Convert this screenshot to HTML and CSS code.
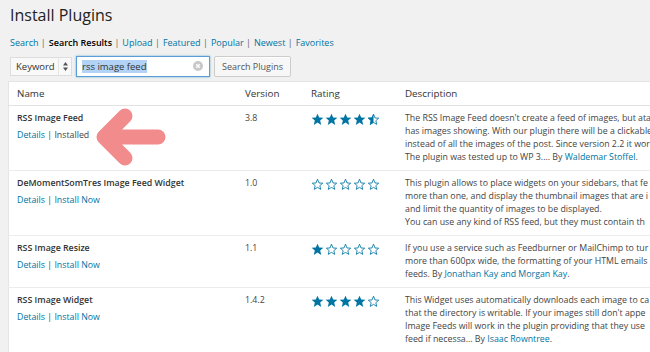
FILE: index.html
```html
<!DOCTYPE html>
<html lang="en">
<head>
    <meta charset="UTF-8">
    <title>Install Plugins</title>
    <link rel="stylesheet" href="styles.css">
</head>
<body>

    <svg width="0" height="0" class="defs">
        <symbol id="star-full" viewBox="0 0 20 20">
            <polygon points="10,1 12.6,7 19,7.4 14.1,11.6 15.7,18.4 10,14.8 4.3,18.4 5.9,11.6 1,7.4 7.4,7" fill="#0074a2"/>
        </symbol>
        <symbol id="star-empty" viewBox="0 0 20 20">
            <polygon points="10,1.8 12.3,7.6 18,8 13.6,11.8 15,17.5 10,14.4 5,17.5 6.4,11.8 2,8 7.7,7.6" fill="none" stroke="#0074a2" stroke-width="1.3" stroke-linejoin="round"/>
        </symbol>
        <symbol id="star-half" viewBox="0 0 20 20">
            <polygon points="10,1.8 12.3,7.6 18,8 13.6,11.8 15,17.5 10,14.4 5,17.5 6.4,11.8 2,8 7.7,7.6" fill="none" stroke="#0074a2" stroke-width="1.3" stroke-linejoin="round"/>
            <polygon points="10,1 7.4,7 1,7.4 5.9,11.6 4.3,18.4 10,14.8" fill="#0074a2"/>
        </symbol>
    </svg>

    <div class="wrap">
        <h2>Install Plugins</h2>

        <ul class="subsubsub">
            <li><a href="#">Search</a> |</li>
            <li><b>Search Results</b> |</li>
            <li><a href="#">Upload</a> |</li>
            <li><a href="#">Featured</a> |</li>
            <li><a href="#">Popular</a> |</li>
            <li><a href="#">Newest</a> |</li>
            <li><a href="#">Favorites</a></li>
        </ul>

        <div class="search-form">
            <div class="select">
                Keyword
                <span class="select-arrows">
                    <svg width="5" height="9" viewBox="0 0 5 9"><polygon points="2.5,0 5,3.5 0,3.5" fill="#555"/><polygon points="0,5.5 5,5.5 2.5,9" fill="#555"/></svg>
                </span>
            </div>
            <div class="search-input">
                <span class="selected">rss image feed</span>
                <span class="clear">
                    <svg width="10" height="10" viewBox="0 0 10 10"><circle cx="5" cy="5" r="5" fill="#c8c8c8"/><path d="M3.2 3.2 L6.8 6.8 M6.8 3.2 L3.2 6.8" stroke="#fff" stroke-width="1.3"/></svg>
                </span>
            </div>
            <button class="button">Search Plugins</button>
        </div>
    </div>

    <table class="plugins">
        <thead>
            <tr>
                <th class="col-name">Name</th>
                <th class="col-version">Version</th>
                <th class="col-rating">Rating</th>
                <th class="col-desc">Description</th>
            </tr>
        </thead>
        <tbody>
            <tr>
                <td class="col-name">
                    <strong>RSS Image Feed</strong>
                    <div class="row-actions"><a href="#">Details</a> | Installed</div>
                </td>
                <td class="col-version">3.8</td>
                <td class="col-rating">
                    <div class="stars">
                        <svg><use href="#star-full"/></svg><svg><use href="#star-full"/></svg><svg><use href="#star-full"/></svg><svg><use href="#star-full"/></svg><svg><use href="#star-half"/></svg>
                    </div>
                </td>
                <td class="col-desc">
                    <div>The RSS Image Feed doesn't create a feed of images, but atac</div>
                    <div>has images showing. With our plugin there will be a clickable</div>
                    <div>instead of all the images of the post. Since version 2.2 it wor</div>
                    <div>The plugin was tested up to WP 3.… By <a href="#">Waldemar Stoffel</a>.</div>
                </td>
            </tr>
            <tr>
                <td class="col-name">
                    <strong>DeMomentSomTres Image Feed Widget</strong>
                    <div class="row-actions"><a href="#">Details</a> | <a href="#">Install Now</a></div>
                </td>
                <td class="col-version">1.0</td>
                <td class="col-rating">
                    <div class="stars">
                        <svg><use href="#star-empty"/></svg><svg><use href="#star-empty"/></svg><svg><use href="#star-empty"/></svg><svg><use href="#star-empty"/></svg><svg><use href="#star-empty"/></svg>
                    </div>
                </td>
                <td class="col-desc">
                    <div>This plugin allows to place widgets on your sidebars, that fe</div>
                    <div>more than one, and display the thumbnail images that are i</div>
                    <div>and limit the quantity of images to be displayed.</div>
                    <div>You can use any kind of RSS feed, but they must contain th</div>
                </td>
            </tr>
            <tr>
                <td class="col-name">
                    <strong>RSS Image Resize</strong>
                    <div class="row-actions"><a href="#">Details</a> | <a href="#">Install Now</a></div>
                </td>
                <td class="col-version">1.1</td>
                <td class="col-rating">
                    <div class="stars">
                        <svg><use href="#star-full"/></svg><svg><use href="#star-empty"/></svg><svg><use href="#star-empty"/></svg><svg><use href="#star-empty"/></svg><svg><use href="#star-empty"/></svg>
                    </div>
                </td>
                <td class="col-desc">
                    <div>If you use a service such as Feedburner or MailChimp to tur</div>
                    <div>more than 600px wide, the formatting of your HTML emails</div>
                    <div>feeds. By <a href="#">Jonathan Kay and Morgan Kay</a>.</div>
                </td>
            </tr>
            <tr>
                <td class="col-name">
                    <strong>RSS Image Widget</strong>
                    <div class="row-actions"><a href="#">Details</a> | <a href="#">Install Now</a></div>
                </td>
                <td class="col-version">1.4.2</td>
                <td class="col-rating">
                    <div class="stars">
                        <svg><use href="#star-full"/></svg><svg><use href="#star-full"/></svg><svg><use href="#star-full"/></svg><svg><use href="#star-full"/></svg><svg><use href="#star-empty"/></svg>
                    </div>
                </td>
                <td class="col-desc">
                    <div>This Widget uses automatically downloads each image to ca</div>
                    <div>that the directory is writable. If your images still don't appe</div>
                    <div>Image Feeds will work in the plugin providing that they use</div>
                    <div>feed if necessa… By <a href="#">Isaac Rowntree</a>.</div>
                </td>
            </tr>
        </tbody>
    </table>

    <!-- pink annotation arrow -->
    <svg class="arrow" width="84" height="72" viewBox="0 0 84 72">
        <path d="M13 34 L34 13 M13 34 L34 55 M13 34 L67 34" fill="none" stroke="#f28b8c" stroke-width="15" stroke-linecap="round" stroke-linejoin="round"/>
    </svg>

</body>
</html>
```

FILE: styles.css
```css
body {
    margin: 0;
    background-color: #f1f1f1;
    font-family: "Open Sans", sans-serif;
    font-size: 8.8px;
    line-height: 13px;
    color: #444;
    overflow: hidden;
    position: relative;
}

a {
    color: #0074a2;
    text-decoration: none;
}

.defs {
    position: absolute;
}

.wrap {
    padding: 0 10px;
}

h2 {
    margin: 0;
    padding: 4px 0 0;
    font-size: 16px;
    line-height: 22px;
    font-weight: 400;
    color: #222;
}

.subsubsub {
    list-style: none;
    margin: 10px 0 0;
    padding: 0;
    display: flex;
    gap: 3px;
    color: #666;
    font-size: 9px;
    line-height: 13.5px;
}

.subsubsub b {
    color: #000;
    font-weight: 600;
}

.search-form {
    display: flex;
    align-items: center;
    gap: 4px;
    margin-top: 6px;
}

.select {
    display: flex;
    align-items: center;
    height: 19px;
    width: 62px;
    padding-left: 5px;
    box-sizing: border-box;
    border: 1px solid #ddd;
    background: #f9f9f9;
    color: #333;
    font-size: 9.5px;
}

.select-arrows {
    margin-left: auto;
    width: 12px;
    height: 17px;
    border-left: 1px solid #e4e4e4;
    display: flex;
    align-items: center;
    justify-content: center;
}

.search-input {
    display: flex;
    align-items: center;
    width: 134px;
    height: 21px;
    box-sizing: border-box;
    padding: 0 6px 0 5px;
    border: 1px solid #5b9dd9;
    box-shadow: 0 0 2px rgba(30, 140, 190, 0.6);
    background: #fff;
    color: #333;
    font-size: 9.5px;
}

.selected {
    background: #b2d3f5;
}

.clear {
    margin-left: auto;
    display: flex;
}

.button {
    height: 21px;
    padding: 0 7px;
    font-family: "Open Sans", sans-serif;
    font-size: 9px;
    color: #555;
    background: #f7f7f7;
    border: 1px solid #ccc;
    border-radius: 2px;
    box-shadow: inset 0 1px 0 #fff;
}

.plugins {
    margin: 4px 0 0 8px;
    width: 1000px;
    border-collapse: collapse;
    background: #fff;
    border: 1px solid #e5e5e5;
    table-layout: fixed;
}

.plugins th {
    text-align: left;
    font-weight: 400;
    font-size: 9.8px;
    color: #333;
    padding: 5px 8px 5px;
    border-bottom: 1px solid #e1e1e1;
}

.plugins td {
    vertical-align: top;
    padding: 6px 8px;
    border-bottom: 1px solid #ececec;
}

.col-name {
    width: 212px;
}

.col-version {
    width: 50px;
}

.col-rating {
    width: 78px;
}

.col-name strong {
    font-weight: 600;
    color: #333;
}

.row-actions {
    margin-top: 4px;
}

.col-desc div {
    white-space: nowrap;
}

.stars {
    display: flex;
    gap: 1px;
    padding-top: 1px;
}

.stars svg {
    width: 13px;
    height: 13px;
}

.arrow {
    position: absolute;
    left: 91px;
    top: 103px;
}
```
